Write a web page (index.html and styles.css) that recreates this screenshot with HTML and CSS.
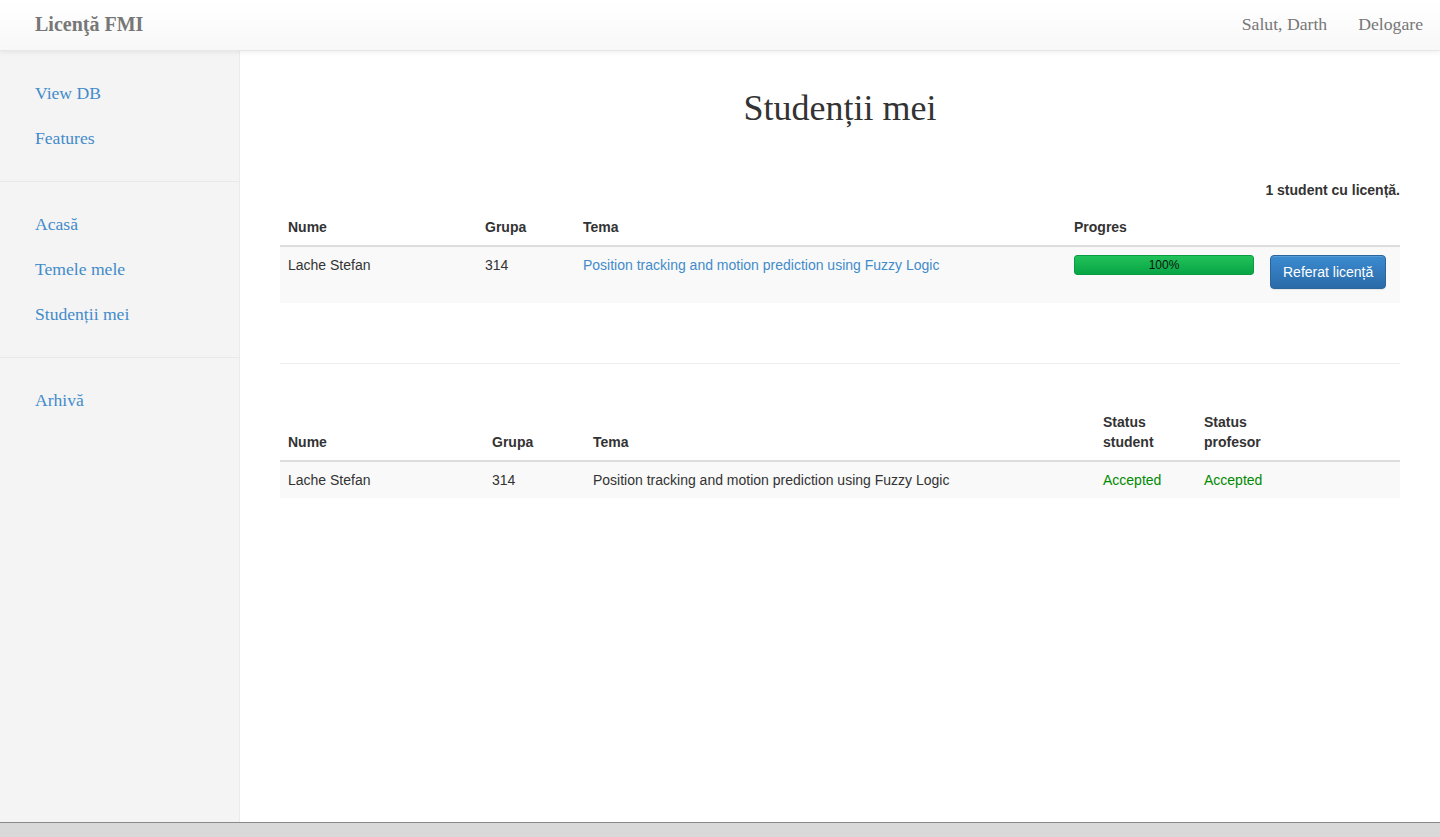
FILE: index.html
```html
<!DOCTYPE html>
<html lang="ro">
<head>
<meta charset="utf-8">
<title>Studenții mei</title>
<link rel="stylesheet" href="styles.css">
</head>
<body>
<div class="app">
  <header class="navbar">
    <a class="brand" href="#">Licenţă FMI</a>
    <nav class="nav-right">
      <a href="#">Salut, Darth</a>
      <a href="#">Delogare</a>
    </nav>
  </header>
  <div class="body">
    <aside class="sidebar">
      <ul class="nav-group">
        <li><a href="#">View DB</a></li>
        <li><a href="#">Features</a></li>
      </ul>
      <ul class="nav-group">
        <li><a href="#">Acasă</a></li>
        <li><a href="#">Temele mele</a></li>
        <li><a href="#">Studenții mei</a></li>
      </ul>
      <ul class="nav-group last">
        <li><a href="#">Arhivă</a></li>
      </ul>
    </aside>
    <main class="main">
      <h1 class="title">Studenții mei</h1>
      <p class="count">1 student cu licență.</p>
      <table class="table t1">
        <colgroup>
          <col class="c-nume1"><col class="c-grupa1"><col class="c-tema1"><col class="c-prog"><col>
        </colgroup>
        <thead>
          <tr><th>Nume</th><th>Grupa</th><th>Tema</th><th>Progres</th><th></th></tr>
        </thead>
        <tbody>
          <tr>
            <td>Lache Stefan</td>
            <td>314</td>
            <td><a href="#" class="link">Position tracking and motion prediction using Fuzzy Logic</a></td>
            <td><div class="progress"><div class="bar" style="width:100%">100%</div></div></td>
            <td><a href="#" class="btn">Referat licență</a></td>
          </tr>
        </tbody>
      </table>
      <hr class="divider">
      <table class="table t2">
        <colgroup>
          <col class="c-nume2"><col class="c-grupa2"><col class="c-tema2"><col class="c-stat"><col class="c-stat"><col>
        </colgroup>
        <thead>
          <tr><th>Nume</th><th>Grupa</th><th>Tema</th><th>Status student</th><th>Status profesor</th><th></th></tr>
        </thead>
        <tbody>
          <tr>
            <td>Lache Stefan</td>
            <td>314</td>
            <td>Position tracking and motion prediction using Fuzzy Logic</td>
            <td class="ok">Accepted</td>
            <td class="ok">Accepted</td>
            <td></td>
          </tr>
        </tbody>
      </table>
    </main>
  </div>
  <div class="bottom-bar"></div>
</div>
</body>
</html>
```
FILE: styles.css
```css
* { box-sizing: border-box; }
html, body { margin: 0; padding: 0; height: 100%; }
body {
  font-family: "Liberation Sans", Arial, sans-serif;
  font-size: 14px;
  line-height: 20px;
  color: #333;
  background: #fff;
  overflow: hidden;
}
a { text-decoration: none; }
.app { display: flex; flex-direction: column; height: 837px; }

.navbar {
  height: 51px;
  flex: 0 0 51px;
  display: flex;
  align-items: center;
  justify-content: space-between;
  padding: 0 17px 0 35px;
  background: linear-gradient(#ffffff, #f8f8f8);
  border-bottom: 1px solid #e7e7e7;
  box-shadow: 0 1px 5px rgba(0,0,0,0.075);
  position: relative;
  z-index: 2;
  font-family: "Liberation Serif", "Times New Roman", serif;
}
.brand {
  color: #777;
  font-weight: bold;
  font-size: 20px;
  line-height: 24px;
  margin-top: -2px;
}
.nav-right { display: flex; gap: 31px; }
.nav-right a { color: #777; font-size: 17.7px; line-height: 24px; margin-top: -2px; }

.body { flex: 1; display: flex; min-height: 0; }
.sidebar {
  width: 240px;
  flex: 0 0 240px;
  background: #f4f4f4;
  border-right: 1px solid #ebebeb;
  font-family: "Liberation Serif", "Times New Roman", serif;
}
.nav-group {
  list-style: none;
  margin: 0;
  padding: 20px 0;
  border-bottom: 1px solid #e9e9e9;
}
.nav-group.last { border-bottom: 0; }
.nav-group a {
  display: block;
  padding: 10px 35px;
  font-size: 17.6px;
  line-height: 25px;
  color: #428bca;
}

.main { flex: 1; padding: 38px 40px 0; min-width: 0; }
.title {
  margin: 0;
  text-align: center;
  font-family: "Liberation Serif", "Times New Roman", serif;
  font-weight: normal;
  font-size: 36px;
  line-height: 38.5px;
  color: #333;
}
.count {
  margin: 52px 0 9px;
  text-align: right;
  font-weight: bold;
}

.table { width: 100%; border-collapse: collapse; table-layout: fixed; }
.table th {
  text-align: left;
  vertical-align: bottom;
  padding: 8px;
  font-weight: bold;
  border-bottom: 2px solid #ddd;
}
.table td { padding: 8px; vertical-align: top; background: #f9f9f9; }
.c-nume1 { width: 197px; }
.c-grupa1 { width: 98px; }
.c-tema1 { width: 491px; }
.c-prog { width: 196px; }
.c-nume2 { width: 204px; }
.c-grupa2 { width: 101px; }
.c-tema2 { width: 510px; }
.c-stat { width: 101px; }

.link { color: #428bca; }
.progress {
  height: 20px;
  margin-bottom: 20px;
  border-radius: 3px;
  overflow: hidden;
  background: #eee;
}
.bar {
  height: 20px;
  background: linear-gradient(#22c25a, #07a545);
  border: 1px solid #0a9c43;
  border-radius: 3px;
  color: #111;
  font-size: 12px;
  line-height: 18px;
  text-align: center;
}
.btn {
  display: inline-block;
  padding: 6px 12px;
  font-size: 14px;
  line-height: 20px;
  color: #fff;
  border: 1px solid #2b669a;
  border-radius: 4px;
  background: linear-gradient(#3b8bd0, #2a6aa8);
  box-shadow: inset 0 1px 0 rgba(255,255,255,0.15), 0 1px 1px rgba(0,0,0,0.075);
  white-space: nowrap;
}
.divider { margin: 60px 0 40px; border: 0; border-top: 1px solid #eee; }
.ok { color: #008a00; }

.bottom-bar {
  flex: 0 0 15px;
  background: #d9d9d9;
  border-top: 1px solid #8a8a8a;
}
```
